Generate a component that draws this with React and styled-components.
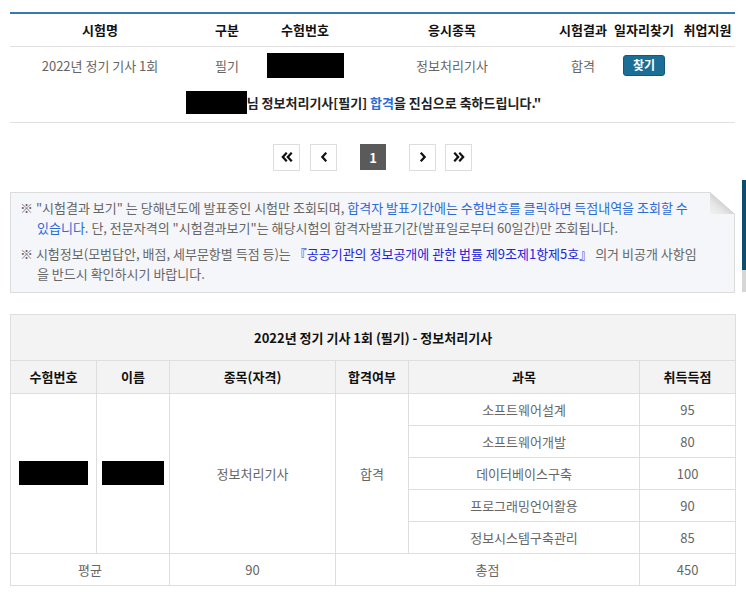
import React from "react";
import styled, { createGlobalStyle } from "styled-components";

const Global = createGlobalStyle`
  html, body { margin: 0; padding: 0; background: #fff; }
  body { font-family: "Noto Sans CJK KR", "Noto Sans", sans-serif; font-size: 13px; color: #666; }
  * { box-sizing: border-box; }
`;

const Page = styled.div`
  width: 746px;
  padding: 12px 11px 0 10px;
  display: flex;
  flex-direction: column;
`;

const TopTable = styled.table`
  width: 725px;
  table-layout: fixed;
  border-collapse: collapse;
  border-top: 2px solid #3a78b5;
  border-bottom: 1px solid #e0e0e0;
`;

const HeadCell = styled.th`
  height: 33px;
  padding: 0;
  font-size: 13px;
  font-weight: 700;
  color: #111;
  text-align: center;
  white-space: nowrap;
  border-bottom: 1px solid #e0e0e0;
`;

const BodyCell = styled.td`
  height: 38px;
  padding: 0;
  text-align: center;
  color: #666;
  font-size: 13px;
  white-space: nowrap;
  vertical-align: middle;
`;

const CongratsCell = styled.td`
  height: 38px;
  padding: 0;
  text-align: center;
  font-size: 13px;
  font-weight: 700;
  color: #222;
  white-space: nowrap;
`;

const Congrats = styled.div`
  display: flex;
  justify-content: center;
  align-items: center;
  margin-left: -18px;
`;

const Blue = styled.span`
  color: ${(p) => p.$c || "#2b6bd6"};
`;

const Redact = styled.div`
  display: inline-block;
  background: #000;
  width: ${(p) => p.$w}px;
  height: ${(p) => p.$h}px;
  vertical-align: middle;
`;

const FindButton = styled.button`
  width: 42px;
  height: 21px;
  padding: 0;
  border: 1px solid #14587a;
  border-radius: 3px;
  background: #1b6f96;
  color: #fff;
  font-family: inherit;
  font-size: 12px;
  font-weight: 700;
  line-height: 18px;
`;

const Pager = styled.div`
  display: flex;
  justify-content: center;
  align-items: center;
  gap: 10px;
  margin: 21px 0 21px 0;
`;

const PageBtn = styled.div`
  width: 27px;
  height: 27px;
  border: 1px solid #ddd;
  background: #fff;
  display: flex;
  align-items: center;
  justify-content: center;
  color: #111;
  margin: ${(p) => p.$m || "0"};
`;

const PageCurrent = styled.div`
  width: 26px;
  height: 26px;
  background: #5a5a5a;
  color: #fff;
  font-weight: 700;
  font-size: 13px;
  display: flex;
  align-items: center;
  justify-content: center;
  margin: 0 13px;
`;

const Notice = styled.div`
  position: relative;
  border: 1px solid #dcdcdc;
  background: #f5f6fa;
  padding: 5px 20px 8px 9px;
  &::before {
    content: "";
    position: absolute;
    top: -1px;
    right: -1px;
    width: 25px;
    height: 22px;
    background: linear-gradient(to bottom left, #fff 0, #fff 49%, #d4d4d4 51%, #e6e6e6 70%, #f2f2f2 100%);
  }
`;

const NoticeItem = styled.p`
  margin: 0 0 6px 0;
  padding-left: 17px;
  text-indent: -17px;
  line-height: 20px;
  font-size: 13px;
  color: #666;
  white-space: nowrap;
  &:last-child { margin-bottom: 0; }
`;

const ResultTable = styled.table`
  margin-top: 21px;
  width: 725px;
  table-layout: fixed;
  border-collapse: collapse;
  border: 1px solid #dedede;
`;

const TitleCell = styled.th`
  height: 46px;
  background: #f3f3f3;
  border: 1px solid #dedede;
  font-size: 13px;
  font-weight: 700;
  color: #111;
  text-align: center;
  padding: 0;
`;

const ColHead = styled.th`
  height: 33px;
  background: #f3f3f3;
  border: 1px solid #dedede;
  font-size: 13px;
  font-weight: 700;
  color: #111;
  text-align: center;
  padding: 0;
`;

const Cell = styled.td`
  height: 32px;
  border: 1px solid #dedede;
  text-align: center;
  color: #666;
  font-size: 13px;
  padding: 0;
  vertical-align: middle;
`;

const SideWidget = styled.div`
  position: fixed;
  right: 0;
  top: 180px;
  width: 4px;
  display: flex;
  flex-direction: column;
`;

const SideBlue = styled.div`
  height: 90px;
  background: #0f4d6e;
`;

const SideGrey = styled.div`
  height: 22px;
  background: #d6d6d6;
`;

const Chevron = ({ double, dir }) => {
  const flip = dir === "right" ? "scale(-1,1) translate(-12,0)" : undefined;
  return (
    <svg width="12" height="10" viewBox="0 0 12 10">
      <g transform={flip} fill="none" stroke="#111" strokeWidth="2.2" strokeLinecap="square">
        {double ? (
          <>
            <polyline points="5,1.5 1.8,5 5,8.5" />
            <polyline points="10,1.5 6.8,5 10,8.5" />
          </>
        ) : (
          <polyline points="7.5,1.5 4.3,5 7.5,8.5" />
        )}
      </g>
    </svg>
  );
};

const subjects = [
  ["소프트웨어설계", 95],
  ["소프트웨어개발", 80],
  ["데이터베이스구축", 100],
  ["프로그래밍언어활용", 90],
  ["정보시스템구축관리", 85],
];

export default function App() {
  return (
    <>
      <Global />
      <Page>
        <TopTable>
          <colgroup>
            <col style={{ width: 180 }} />
            <col style={{ width: 74 }} />
            <col style={{ width: 82 }} />
            <col style={{ width: 212 }} />
            <col style={{ width: 50 }} />
            <col style={{ width: 72 }} />
            <col style={{ width: 55 }} />
          </colgroup>
          <thead>
            <tr>
              <HeadCell>시험명</HeadCell>
              <HeadCell>구분</HeadCell>
              <HeadCell>수험번호</HeadCell>
              <HeadCell>응시종목</HeadCell>
              <HeadCell>시험결과</HeadCell>
              <HeadCell>일자리찾기</HeadCell>
              <HeadCell>취업지원</HeadCell>
            </tr>
          </thead>
          <tbody>
            <tr>
              <BodyCell>2022년 정기 기사 1회</BodyCell>
              <BodyCell>필기</BodyCell>
              <BodyCell>
                <Redact $w={77} $h={25} />
              </BodyCell>
              <BodyCell>정보처리기사</BodyCell>
              <BodyCell>합격</BodyCell>
              <BodyCell>
                <FindButton>찾기</FindButton>
              </BodyCell>
              <BodyCell />
            </tr>
            <tr>
              <CongratsCell colSpan={7}>
                <Congrats>
                  <Redact $w={61} $h={23} />
                  <span>
                    님 정보처리기사[필기] <Blue>합격</Blue>을 진심으로 축하드립니다."
                  </span>
                </Congrats>
              </CongratsCell>
            </tr>
          </tbody>
        </TopTable>

        <Pager>
          <PageBtn>
            <Chevron double />
          </PageBtn>
          <PageBtn>
            <Chevron />
          </PageBtn>
          <PageCurrent>1</PageCurrent>
          <PageBtn $m="0 -1px 0 0">
            <Chevron dir="right" />
          </PageBtn>
          <PageBtn>
            <Chevron double dir="right" />
          </PageBtn>
        </Pager>

        <Notice>
          <NoticeItem>
            ※ "시험결과 보기" 는 당해년도에 발표중인 시험만 조회되며,{" "}
            <Blue>합격자 발표기간에는 수험번호를 클릭하면 득점내역을 조회할 수</Blue>
            <br />
            <Blue>있습니다.</Blue> 단, 전문자격의 "시험결과보기"는 해당시험의 합격자발표기간(발표일로부터 60일간)만 조회됩니다.
          </NoticeItem>
          <NoticeItem>
            ※ 시험정보(모범답안, 배점, 세부문항별 득점 등)는{" "}
            <Blue $c="#2323d8">『공공기관의 정보공개에 관한 법률 제9조제1항제5호』</Blue> 의거 비공개 사항임
            <br />
            을 반드시 확인하시기 바랍니다.
          </NoticeItem>
        </Notice>

        <ResultTable>
          <colgroup>
            <col style={{ width: 86 }} />
            <col style={{ width: 73 }} />
            <col style={{ width: 166 }} />
            <col style={{ width: 73 }} />
            <col style={{ width: 231 }} />
            <col style={{ width: 96 }} />
          </colgroup>
          <thead>
            <tr>
              <TitleCell colSpan={6}>2022년 정기 기사 1회 (필기) - 정보처리기사</TitleCell>
            </tr>
            <tr>
              <ColHead>수험번호</ColHead>
              <ColHead>이름</ColHead>
              <ColHead>종목(자격)</ColHead>
              <ColHead>합격여부</ColHead>
              <ColHead>과목</ColHead>
              <ColHead>취득득점</ColHead>
            </tr>
          </thead>
          <tbody>
            {subjects.map(([name, score], i) => (
              <tr key={name}>
                {i === 0 && (
                  <>
                    <Cell rowSpan={5}>
                      <Redact $w={69} $h={24} />
                    </Cell>
                    <Cell rowSpan={5}>
                      <Redact $w={62} $h={24} />
                    </Cell>
                    <Cell rowSpan={5}>정보처리기사</Cell>
                    <Cell rowSpan={5}>합격</Cell>
                  </>
                )}
                <Cell>{name}</Cell>
                <Cell>{score}</Cell>
              </tr>
            ))}
            <tr>
              <Cell colSpan={2}>평균</Cell>
              <Cell>90</Cell>
              <Cell colSpan={2}>총점</Cell>
              <Cell>450</Cell>
            </tr>
          </tbody>
        </ResultTable>
      </Page>
      <SideWidget>
        <SideBlue />
        <SideGrey />
      </SideWidget>
    </>
  );
}
